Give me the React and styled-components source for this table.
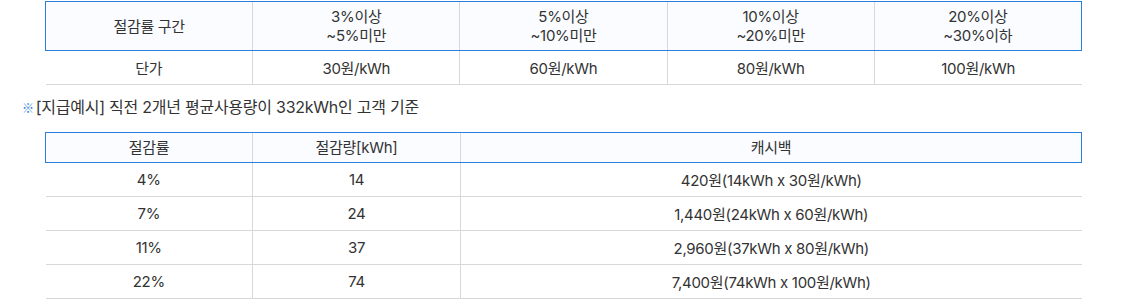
import React from 'react';
import styled, { createGlobalStyle } from 'styled-components';

const GlobalStyle = createGlobalStyle`
  body {
    margin: 0;
    background: #fff;
    font-family: Inter, "Noto Sans CJK KR", sans-serif;
    color: #333;
  }
`;

const Page = styled.div`
  padding: 1px 60px 0 22px;
`;

const Table = styled.table`
  width: 1037px;
  margin-left: 23px;
  border-collapse: collapse;
  table-layout: fixed;
  font-size: 15px;
  letter-spacing: -0.3px;
`;

const Th = styled.th`
  height: ${({ tall }) => (tall ? '48px' : '29px')};
  padding: 0;
  font-weight: 400;
  line-height: 19px;
  background: #fafcff;
  border-top: 1px solid #2b7de0;
  border-bottom: 1px solid #2b7de0;
  border-left: 1px solid #d8d8d8;
  &:first-child {
    border-left: 1px solid #2b7de0;
  }
  &:last-child {
    border-right: 1px solid #2b7de0;
  }
`;

const Td = styled.td`
  height: 33px;
  padding: 0;
  text-align: center;
  border-bottom: 1px solid #d8d8d8;
  border-left: 1px solid #d8d8d8;
  &:first-child {
    border-left: none;
  }
`;

const Note = styled.p`
  margin: 10px 0 12px;
  font-size: 16px;
  line-height: 24px;
  letter-spacing: -0.25px;
  color: #333;
`;

const Mark = styled.span`
  color: #2b7de0;
  font-family: "Noto Sans CJK KR", sans-serif;
  font-weight: 700;
  font-size: 12px;
  margin-right: 2px;
`;

const rates = [
  ['3%이상', '~5%미만', '30원/kWh'],
  ['5%이상', '~10%미만', '60원/kWh'],
  ['10%이상', '~20%미만', '80원/kWh'],
  ['20%이상', '~30%이하', '100원/kWh'],
];

const examples = [
  ['4%', '14', '420원(14kWh x 30원/kWh)'],
  ['7%', '24', '1,440원(24kWh x 60원/kWh)'],
  ['11%', '37', '2,960원(37kWh x 80원/kWh)'],
  ['22%', '74', '7,400원(74kWh x 100원/kWh)'],
];

export default function App() {
  return (
    <>
      <GlobalStyle />
      <Page>
        <Table>
          <thead>
            <tr>
              <Th tall>절감률 구간</Th>
              {rates.map((r) => (
                <Th tall key={r[0]}>
                  {r[0]}
                  <br />
                  {r[1]}
                </Th>
              ))}
            </tr>
          </thead>
          <tbody>
            <tr>
              <Td>단가</Td>
              {rates.map((r) => (
                <Td key={r[2]}>{r[2]}</Td>
              ))}
            </tr>
          </tbody>
        </Table>
        <Note>
          <Mark>※</Mark>[지급예시] 직전 2개년 평균사용량이 332kWh인 고객 기준
        </Note>
        <Table>
          <colgroup>
            <col style={{ width: '207px' }} />
            <col style={{ width: '208px' }} />
            <col />
          </colgroup>
          <thead>
            <tr>
              <Th>절감률</Th>
              <Th>절감량[kWh]</Th>
              <Th>캐시백</Th>
            </tr>
          </thead>
          <tbody>
            {examples.map((e) => (
              <tr key={e[0]}>
                <Td>{e[0]}</Td>
                <Td>{e[1]}</Td>
                <Td>{e[2]}</Td>
              </tr>
            ))}
          </tbody>
        </Table>
      </Page>
    </>
  );
}
